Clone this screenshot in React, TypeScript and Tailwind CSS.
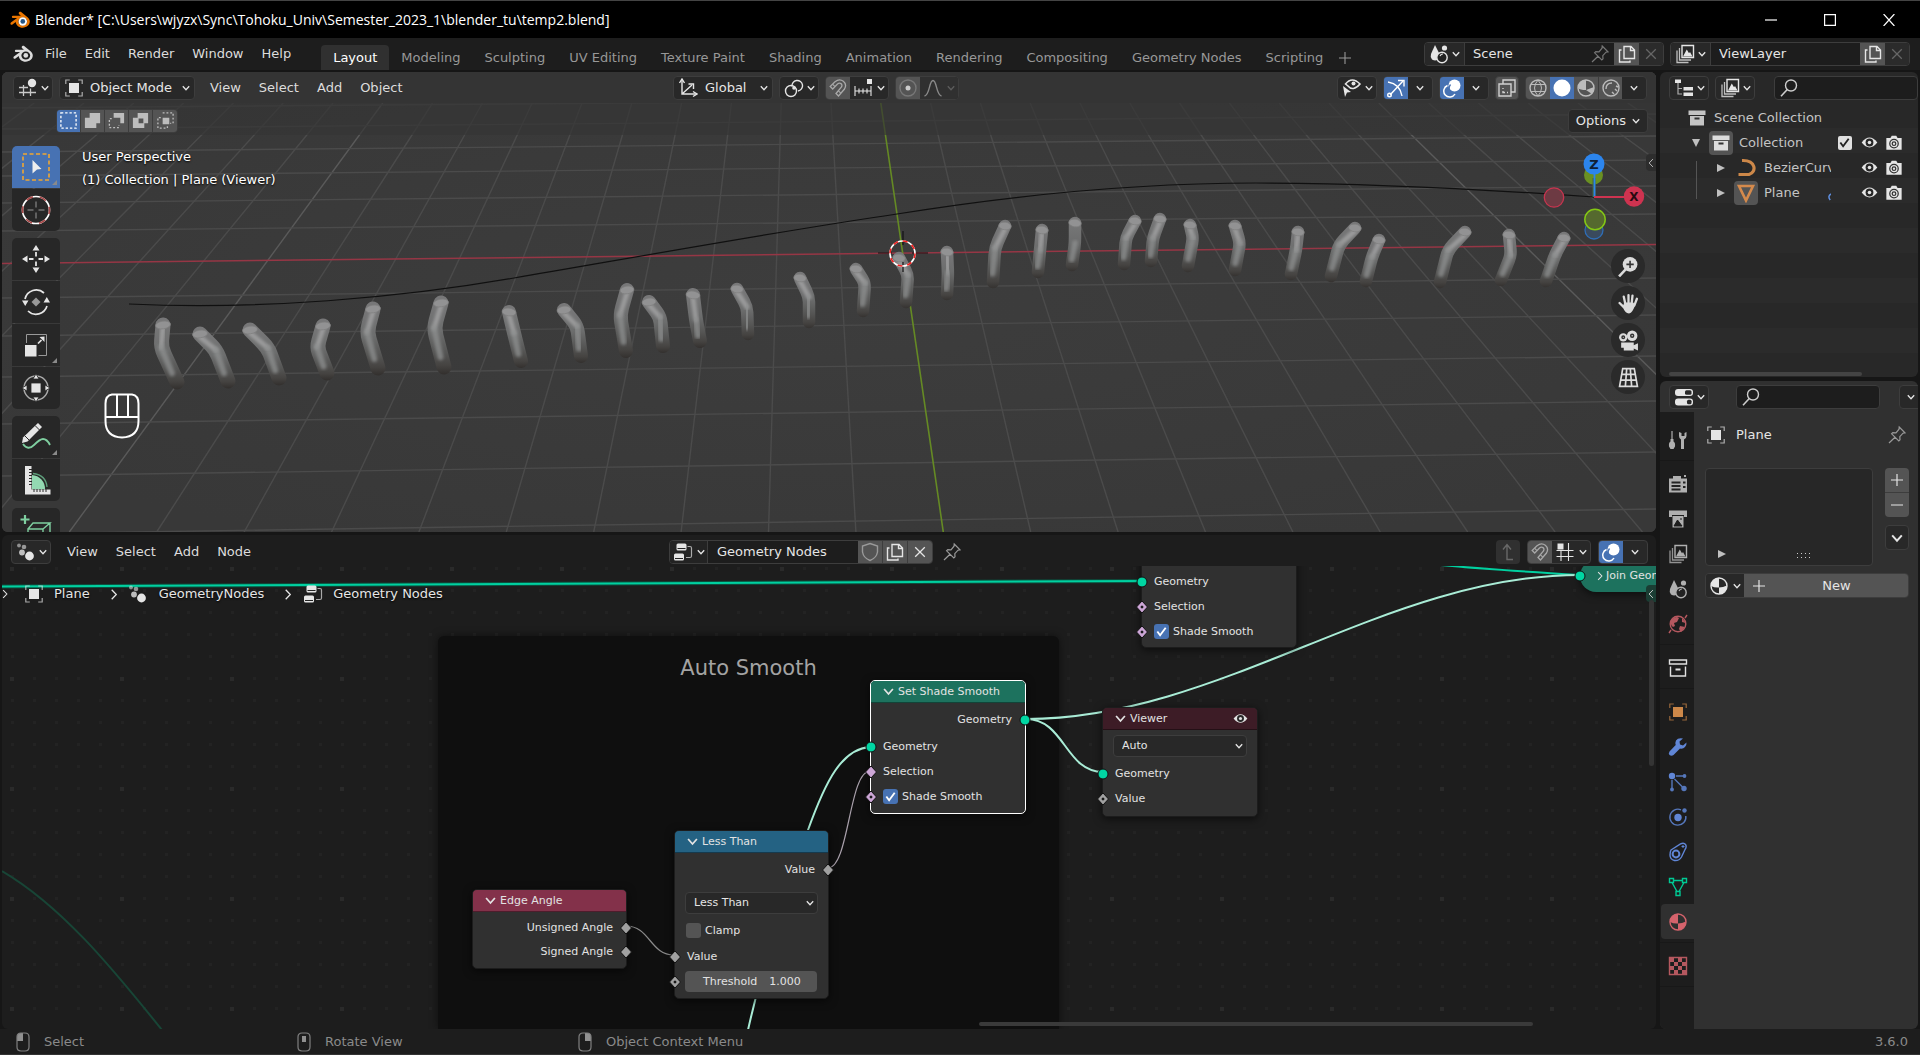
import { useState, type ReactNode } from "react";
import { clsx } from "clsx";

/* ---------- icons ---------- */

function Icon({ children, className = "size-5" }: { children: ReactNode; className?: string }) {
  return (
    <svg viewBox="0 0 20 20" className={clsx("shrink-0", className)} fill="none" stroke="currentColor" strokeWidth="1.4" aria-hidden="true">
      {children}
    </svg>
  );
}

const Chevron = ({ className = "w-2 h-3" }: { className?: string }) => (
  <svg viewBox="0 0 8 8" className={clsx("shrink-0", className)} fill="none" stroke="currentColor" strokeWidth="1.3" aria-hidden="true">
    <path d="M.8 2.2 4 5.8 7.2 2.2" />
  </svg>
);
const ChevronRight = ({ className = "w-2 h-3" }: { className?: string }) => (
  <svg viewBox="0 0 8 12" className={clsx("shrink-0", className)} fill="none" stroke="currentColor" strokeWidth="1.4" aria-hidden="true">
    <path d="M1.5 .8 6.5 6 1.5 11.2" />
  </svg>
);
const ChevronLeft = ({ className = "w-2 h-3" }: { className?: string }) => (
  <svg viewBox="0 0 8 12" className={clsx("shrink-0", className)} fill="none" stroke="currentColor" strokeWidth="1.3" aria-hidden="true">
    <path d="M6.5 .8 1.5 6 6.5 11.2" />
  </svg>
);
const BlenderLogo = ({ color = false }: { color?: boolean }) => (
  <svg viewBox="0 0 24 22" className="h-[18px] w-5 shrink-0" aria-hidden="true">
    <path
      fill={color ? "#ea7600" : "#dcdcdc"}
      fillRule="evenodd"
      d="M11.2 1.2c.7-.5 1.600-.5 2.200 0l8.200 6.600c3.200 2.800 3 7.400.2 10-3.400 3.200-9.200 3.400-12.600.4-1.500-1.300-2.300-3-2.400-4.800l-4 3c-.8.6-1.900.4-2.300-.3-.4-.7-.2-1.400.4-1.900l7.500-5.700H3.800c-1 0-1.700-.6-1.700-1.300 0-.8.700-1.300 1.600-1.300h9.400L11 4c-.9-.9-.7-2.200.2-2.800ZM15.400 7.800c-3 0-5.400 2.200-5.400 5s2.400 5 5.400 5 5.400-2.200 5.400-5-2.400-5-5.400-5Z"
    />
    {color && <circle cx="15.400" cy="12.800" r="5.200" fill="#fff" />}
    <circle cx="15.400" cy="12.800" r="2.900" fill={color ? "#265787" : "#dcdcdc"} />
  </svg>
);
const Pin = ({ className }: { className?: string }) => (
  <Icon className={className}>
    <path d="m12.200 2 5.800 5.800-2 .4-3.200 3.400.2 3.200-1.200 1.200L4.600 8.800 5.800 7.600l3.200.2 3-3.600ZM8 12.200 2 18" strokeWidth="1.2" />
  </Icon>
);
const Copy = () => (
  <Icon>
    <path d="M7 2.500h7l3.500 3.500v8.500H7ZM13.500 2.500V6.500h4M4.500 6H2.500v12H13v-1.500" />
  </Icon>
);
const Cross = () => (
  <Icon className="size-4">
    <path d="m4 4 12 12M16 4 4 16" strokeWidth="1.600" />
  </Icon>
);
const Search = () => (
  <Icon>
    <circle cx="12" cy="7.500" r="5.500" />
    <path d="m8.500 11.300-6.500 7" strokeWidth="1.600" />
  </Icon>
);
const ObjectSquare = ({ className }: { className?: string }) => (
  <Icon className={className}>
    <rect x="5" y="5" width="10" height="10" fill="currentColor" stroke="none" />
    <path d="M1.800 6V2h4M14.200 2h4v4M18.200 14v4h-4M5.800 18h-4v-4" strokeWidth="1.200" opacity=".7" />
  </Icon>
);
const CollectionIcon = () => (
  <Icon>
    <path d="M1.500 2.500h17V7h-17ZM3 8h14v9.500H3Z" fill="currentColor" stroke="none" />
    <path d="M7.500 10.500h5" stroke="#333" strokeWidth="2" />
  </Icon>
);
const EditorGrid = () => (
  <Icon>
    <circle cx="14" cy="5" r="4.200" fill="currentColor" stroke="none" />
    <path d="M1 9.500h9M1 14.500h17M5.500 7v11M12.500 10.500V18" strokeWidth="1.300" opacity=".85" />
  </Icon>
);
const NodeEditorIcon = () => (
  <Icon>
    <g fill="currentColor" stroke="none">
      <circle cx="3" cy="3.500" r="1.900" opacity=".55" />
      <circle cx="8" cy="5" r="2.300" opacity=".6" />
      <circle cx="6" cy="10.500" r="2.900" opacity=".8" />
      <circle cx="13.500" cy="14" r="4.400" />
    </g>
  </Icon>
);
const NodeTreeIcon = () => (
  <Icon>
    <rect x="3.500" y="1.500" width="10" height="7" rx="1.500" fill="currentColor" stroke="none" />
    <rect x="1" y="11.500" width="10" height="7" rx="1.500" fill="currentColor" stroke="none" />
    <path d="M4.500 6.500h8M2 16.500h8" stroke="#222" strokeWidth="1" />
    <path d="M14.500 4.500h2.500q1.500 0 1.500 1.500v8q0 1.500-1.500 1.500h-4" strokeWidth="1.200" opacity=".7" />
  </Icon>
);
const ImageStack = () => (
  <Icon>
    <path d="M7 1.500h11.500v12H7Z" />
    <path d="m8 12.500 3.800-7 2.200 3.800 1-1.300 2.500 4.500Z" fill="currentColor" stroke="none" />
    <path d="M4.500 4v12H16M2 6.500v12h11.500" strokeWidth="1.300" opacity=".8" />
  </Icon>
);
const SceneIcon = () => (
  <Icon>
    <path d="M6 1 11 11q0 3-3 5-2 1-5-.500Q1 13 2 10Z" fill="currentColor" stroke="none" />
    <circle cx="15.500" cy="4" r="2.600" fill="currentColor" stroke="none" />
    <circle cx="13" cy="13.500" r="5.200" fill="#222" />
    <path d="M11 12q1-2.200 3-2" strokeWidth="1.100" />
  </Icon>
);
const Magnet = () => (
  <Icon>
    <path d="M2.200 8.500 7 3.800C13 -1 20 5 16.500 11L10.500 18 8 15.500l5.500-6.500c1.500-3-1.500-5-4-3L4.700 11Z" strokeWidth="1.300" />
    <path d="m4.500 6.200 2.500 2.500M10.200 12.700l2.600 2.500" strokeWidth="1.100" />
  </Icon>
);
const Overlays = () => (
  <Icon>
    <circle cx="12.500" cy="7.500" r="6" fill="currentColor" stroke="none" />
    <path d="M5.500 7.500a6 6 0 1 0 7.500 8.500" strokeWidth="1.500" />
    <path d="M8.500 6.500q-3 4 .500 7" stroke="#4772b3" strokeWidth="1.300" />
  </Icon>
);
const MaterialBall = () => (
  <Icon>
    <circle cx="10" cy="10" r="8" />
    <path d="M10 2a8 8 0 0 0-8 8q4 2 8 1.500ZM10 11.500q4 0 8-2a8 8 0 0 1-8 8.500Z" fill="currentColor" stroke="none" />
  </Icon>
);
const Eye = ({ className = "size-[17px]" }: { className?: string }) => (
  <Icon className={className}>
    <path d="M.8 10Q10-1.500 19.200 10 10 21.500 .8 10Z" fill="currentColor" stroke="none" />
    <circle cx="10" cy="10" r="4.600" fill="#262626" stroke="none" />
    <circle cx="10" cy="10" r="2.100" fill="currentColor" stroke="none" />
  </Icon>
);
const Camera = () => (
  <Icon className="size-[18px]">
    <path d="M1.500 4.500H6L7.500 2h5L14 4.500h4.500v13h-17Z" fill="currentColor" stroke="none" />
    <circle cx="10" cy="10.700" r="4.700" stroke="#333" />
    <circle cx="10" cy="10.700" r="2" stroke="#333" />
  </Icon>
);

/* ---------- shared widgets ---------- */

const box = "flex h-6 shrink-0 items-center rounded border border-[#3d3d3d] bg-[#282828] text-[#e5e5e5]";

function IconDrop({ label, children }: { label: string; children: ReactNode }) {
  return (
    <button aria-label={label} className={clsx(box, "w-10 justify-center gap-[3px]")}>
      {children}
      <Chevron />
    </button>
  );
}

function Menus({ items, className }: { items: string[]; className?: string }) {
  return (
    <nav className={clsx("flex items-center text-[#dcdcdc]", className)}>
      {items.map((m) => (
        <button key={m} className="px-[9px]">{m}</button>
      ))}
    </nav>
  );
}

function Drop({ label, options, icon, className }: { label: string; options: string[]; icon?: ReactNode; className?: string }) {
  return (
    <label className={clsx("flex items-center rounded border border-[#3d3d3d] bg-[#282828] text-[#e5e5e5]", className)}>
      {icon}
      <select aria-label={label} className="min-w-0 flex-1 appearance-none bg-transparent outline-none">
        {options.map((o) => (
          <option key={o}>{o}</option>
        ))}
      </select>
      <Chevron />
    </label>
  );
}

function Check({ label, initial = false, light = false, hideLabel = false }: { label: string; initial?: boolean; light?: boolean; hideLabel?: boolean }) {
  const [on, setOn] = useState(initial);
  return (
    <label className="flex items-center gap-1">
      <span className="grid size-[15px] shrink-0 place-items-center">
        <input
          type="checkbox"
          aria-label={label}
          checked={on}
          onChange={() => setOn(!on)}
          className={clsx("col-start-1 row-start-1 appearance-none", light ? "size-[14px] rounded-[2px] bg-[#e0e0e0]" : "size-[15px] rounded-[3px]", !light && (on ? "bg-[#4772b3]" : "bg-[#545454]"))}
        />
        {on && (
          <svg viewBox="0 0 14 14" className="pointer-events-none col-start-1 row-start-1 size-[13px]" fill="none" stroke={light ? "#222" : "#fff"} strokeWidth="2">
            <path d="m2.500 7 3 4L11.500 3" />
          </svg>
        )}
      </span>
      {!hideLabel && label}
    </label>
  );
}

/* ---------- top bars ---------- */

function TitleBar() {
  return (
    <header className="flex h-[38px] shrink-0 items-center border-t border-[#444] bg-black px-[10px] text-white">
      <BlenderLogo color />
      <h1 className="ml-[5px] font-['Open_Sans',sans-serif] text-[14px]">
        Blender* [C:\Users\wjyzx\Sync\Tohoku_Univ\Semester_2023_1\blender_tu\temp2.blend]
      </h1>
      <div className="ml-auto flex">
        <button aria-label="Minimize" className="flex w-[59px] justify-center">
          <Icon className="size-3"><path d="M0 10h20" strokeWidth="2" /></Icon>
        </button>
        <button aria-label="Maximize" className="flex w-[59px] justify-center">
          <Icon className="size-3"><path d="M1 1h18v18H1Z" strokeWidth="2" /></Icon>
        </button>
        <button aria-label="Close" className="-mr-[8px] flex w-[59px] justify-center">
          <Icon className="size-3"><path d="m1 0 18 20M19 0 1 20" strokeWidth="2" /></Icon>
        </button>
      </div>
    </header>
  );
}

const workspaces = ["Layout", "Modeling", "Sculpting", "UV Editing", "Texture Paint", "Shading", "Animation", "Rendering", "Compositing", "Geometry Nodes", "Scripting"];

function IdField({ label, value, icon, pin, className }: { label: string; value: string; icon: ReactNode; pin?: boolean; className?: string }) {
  return (
    <div className={clsx("flex h-6 shrink-0 items-stretch overflow-hidden rounded border border-[#3d3d3d] bg-[#1d1d1d] text-[#e5e5e5]", className)}>
      <button aria-label={`Browse ${label}`} className="flex w-10 items-center justify-center gap-[3px] border-r border-[#3d3d3d] bg-[#282828]">
        {icon}
        <Chevron />
      </button>
      <input aria-label={label} defaultValue={value} className="w-0 min-w-0 flex-1 bg-transparent pl-2 outline-none" />
      {pin && <span className="flex items-center pr-1 text-[#777]"><Pin /></span>}
      <button aria-label={`New ${label}`} className="flex w-[25px] items-center justify-center bg-[#545454]"><Copy /></button>
      <button aria-label={`Remove ${label}`} className="flex w-6 items-center justify-center bg-[#2b2b2b] text-[#666]"><Cross /></button>
    </div>
  );
}

function TopBar() {
  return (
    <div className="flex h-8 shrink-0 items-start bg-[#1d1d1d] pl-[13px] pr-[10px]">
      <div className="flex h-8 items-center">
        <BlenderLogo />
        <Menus items={["File", "Edit", "Render", "Window", "Help"]} className="ml-[3px]" />
      </div>
      <div role="tablist" className="ml-[21px] flex h-8 items-end">
        {workspaces.map((w, i) => (
          <button key={w} role="tab" aria-selected={i === 0} className={clsx("h-[25px] rounded-t px-3", i === 0 ? "bg-[#303030] text-white" : "text-[#989898]")}>
            {w}
          </button>
        ))}
        <button aria-label="Add workspace" className="ml-1 h-[25px] text-[#989898]">
          <Icon className="size-3"><path d="M0 10h20M10 0v20" strokeWidth="1.800" /></Icon>
        </button>
      </div>
      <div className="ml-auto mt-1 flex gap-[6px]">
        <IdField label="Scene" value="Scene" icon={<SceneIcon />} pin className="w-[240px]" />
        <IdField label="View layer" value="ViewLayer" icon={<ImageStack />} className="w-[240px]" />
      </div>
    </div>
  );
}

/* ---------- 3D viewport scene ---------- */

type Pt = [number, number];
const tubes: [Pt, Pt, Pt][] = [
  [[163, 325], [161, 347], [177, 382]],
  [[200, 334], [216, 350], [228, 381]],
  [[250, 330], [268, 348], [279, 378]],
  [[323, 326], [317, 347], [327, 373]],
  [[373, 309], [367, 332], [378, 368]],
  [[441, 303], [434, 328], [444, 367]],
  [[509, 312], [514, 333], [521, 361]],
  [[564, 310], [577, 326], [581, 356]],
  [[627, 290], [620, 315], [626, 351]],
  [[649, 302], [660, 317], [663, 346]],
  [[693, 295], [696, 320], [700, 341]],
  [[737, 289], [747, 307], [748, 334]],
  [[800, 278], [809, 297], [809, 322]],
  [[856, 269], [865, 283], [863, 311]],
  [[899, 258], [908, 275], [906, 302]],
  [[947, 252], [948, 273], [947, 294]],
  [[1005, 226], [995, 248], [993, 282]],
  [[1042, 230], [1040, 250], [1038, 272]],
  [[1075, 223], [1075, 243], [1072, 265]],
  [[1135, 221], [1126, 238], [1124, 264]],
  [[1160, 219], [1153, 238], [1151, 261]],
  [[1190, 225], [1193, 238], [1188, 266]],
  [[1235, 226], [1240, 243], [1235, 270]],
  [[1298, 232], [1296, 250], [1291, 274]],
  [[1355, 228], [1339, 245], [1331, 276]],
  [[1379, 240], [1372, 257], [1366, 281]],
  [[1465, 232], [1448, 250], [1440, 282]],
  [[1509, 235], [1511, 255], [1501, 280]],
  [[1564, 238], [1555, 255], [1546, 281]],
];

const rows: [number, number][] = [
  [87, 76], [108, 95], [129, 114], [152, 136], [176, 160], [203, 186], [231, 214],
  [298, 278], [336, 315], [377, 356], [424, 401], [476, 452], [534, 509],
];
const columns = Array.from({ length: 49 }, (_, i) => i - 24).filter((k) => k !== 0);

function tubePath([a, b, c]: [Pt, Pt, Pt]) {
  const mix = (p: Pt, q: Pt, t: number) => `${p[0] + (q[0] - p[0]) * t} ${p[1] + (q[1] - p[1]) * t}`;
  return `M${a[0]} ${a[1]} L${mix(a, b, 0.7)} Q${b[0]} ${b[1]} ${mix(b, c, 0.2)} L${c[0]} ${c[1]}`;
}

function Scene() {
  return (
    <svg viewBox="2 72 1654 460" preserveAspectRatio="xMidYMid slice" className="absolute inset-0 size-full" aria-label="3D scene">
      <defs>
        <radialGradient id="bg" cx=".5" cy=".5" r=".6">
          <stop offset="0" stopColor="#3d3d3d" />
          <stop offset="1" stopColor="#383838" />
        </radialGradient>
        {tubes.map(([a, , c], i) => (
          <linearGradient key={i} id={`t${i}`} gradientUnits="userSpaceOnUse" x1="0" x2="0" y1={a[1]} y2={c[1] + 7}>
            <stop offset="0" stopColor="#777778" />
            <stop offset=".4" stopColor="#6c6d6d" />
            <stop offset=".7" stopColor="#555554" />
            <stop offset=".88" stopColor="#454341" />
            <stop offset="1" stopColor="#33302e" />
          </linearGradient>
        ))}
        <filter id="soft" x="-100%" y="-20%" width="300%" height="140%"><feGaussianBlur stdDeviation="1.6" /></filter>
      </defs>
      <rect x="2" y="72" width="1654" height="460" fill="url(#bg)" />
      <g strokeWidth="1.400" stroke="#4b4b4b">
        {columns.map((k) => (
          <line key={k} x1={880.8 + 49.8 * k} y1="103" x2={943.3 + 87.4 * k} y2="532" stroke={Math.abs(k) === 10 ? "#5a5a5a" : undefined} />
        ))}
        {rows.map(([l, r]) => (
          <line key={l} x1="2" y1={l} x2="1656" y2={r} />
        ))}
      </g>
      <line x1="2" y1="263.500" x2="1656" y2="244.500" stroke="#963645" strokeWidth="1.500" />
      <line x1="880.800" y1="103" x2="943.300" y2="532" stroke="#658a24" strokeWidth="1.600" />
      <path d="M129 304 C260 310 400 298 514 278 C620 260 780 231 897 214 C1040 191 1160 183 1256 183 C1360 183 1480 189 1594 197" fill="none" stroke="#101010" strokeWidth="1.200" />
      {tubes.map((t, i) => {
        const left = t[0][0] < 700;
        const w = t[0][0] < 480 ? 15 : left ? 14 : 12.5;
        const [a, b, c] = t;
        return (
          <g key={i} fill="none" strokeLinejoin="round">
            <path d={tubePath(t)} stroke={`url(#t${i})`} strokeWidth={w} strokeLinecap="round" />
            <path d={`M${a[0]} ${a[1] + 3} L${b[0]} ${b[1]}`} stroke="#b0b0b1" strokeWidth="5" opacity=".65" filter="url(#soft)" strokeLinecap="round" />
            <path d={`M${b[0]} ${b[1]} L${(b[0] + c[0] * 3) / 4 - 1} ${(b[1] + c[1] * 3) / 4}`} stroke="#8e9090" strokeWidth="6" opacity=".75" filter="url(#soft)" strokeLinecap="round" />
            <ellipse cx={a[0]} cy={a[1]} rx={w / 2} ry="3.800" fill="#929293" stroke="#7f7f80" strokeWidth=".7" transform={`rotate(${left && a[0] !== 509 && a[0] !== 693 ? -8 : 8} ${a[0]} ${a[1]})`} />
          </g>
        );
      })}
      <path d="M878 253h14M912 253h16M903 231v14M903 262v10" stroke="#111" strokeWidth="1.200" />
      <circle cx="902.500" cy="253.500" r="12.500" fill="none" stroke="#fff" strokeWidth="1.600" />
      <circle cx="902.500" cy="253.500" r="12.500" fill="none" stroke="#f02020" strokeWidth="1.600" strokeDasharray="4.900 4.900" />
    </svg>
  );
}

function AxisGizmo() {
  return (
    <svg viewBox="0 0 104 90" className="absolute right-[10px] top-[80px] h-[90px] w-[104px]" aria-label="View orientation">
      <g transform="translate(-1542 -152)">
        <circle cx="1593.500" cy="175" r="9.500" fill="#6a9022" />
        <circle cx="1594" cy="230" r="9" fill="#3a4a5e" stroke="#2f6db5" strokeWidth="1.300" />
        <circle cx="1554" cy="197.500" r="9.700" fill="#6d3a43" stroke="#c7354f" strokeWidth="1.300" />
        <path d="M1594 178v19" stroke="#47683e" strokeWidth="3" />
        <path d="M1594.500 164v33" stroke="#2c85ed" strokeWidth="1.800" />
        <path d="M1594 197h32" stroke="#ce3350" strokeWidth="2" />
        <circle cx="1594" cy="164" r="10.500" fill="#2c85ed" />
        <circle cx="1634" cy="196.500" r="10.200" fill="#ce3350" />
        <circle cx="1595" cy="219.500" r="10.200" fill="#55692e" stroke="#84c715" strokeWidth="1.500" />
        <text x="1594" y="168.500" textAnchor="middle" fontSize="13" fontWeight="700" fill="#102036">Z</text>
        <text x="1634" y="201" textAnchor="middle" fontSize="12" fontWeight="700" fill="#2a0a10">X</text>
      </g>
    </svg>
  );
}

const navIcons: [string, ReactNode][] = [
  ["Zoom", <Icon key="z" className="size-[21px]"><circle cx="11.500" cy="8" r="7" fill="#dcdcdc" stroke="none" /><path d="m7.500 12.500-6.500 7" stroke="#dcdcdc" strokeWidth="2.400" /><path d="M11.500 4.500v7M8 8h7" stroke="#333" strokeWidth="1.500" /></Icon>],
  ["Pan", <Icon key="p" className="size-[21px]"><path d="M7 10.500 5.500 3.500M10 10V2M13 10l.8-7.500M15.500 12 18 5.500M5.500 13.500 1.500 9.500" stroke="#dcdcdc" strokeWidth="2.200" strokeLinecap="round" /><path d="M6 9h8.500l1.800 2.500Q14 19 10.500 19.500 6.500 19 4.500 13Z" fill="#dcdcdc" stroke="none" /></Icon>],
  ["Camera view", <Icon key="c" className="size-[21px]"><g fill="#dcdcdc" stroke="none"><circle cx="5" cy="7" r="4" /><circle cx="13.500" cy="5.500" r="5" /><path d="M3 12h12v2.500l4-2v7l-4-2V19.500H5.500V17H3Z" /></g><circle cx="5" cy="7" r="1.200" stroke="#333" /><circle cx="13.500" cy="5.500" r="1.400" stroke="#333" /></Icon>],
  ["Perspective", <Icon key="g" className="size-[21px]"><path d="M4.500 1.500h11L18.500 18.500h-17ZM3.500 7h13M2.500 12.500h15M8.300 1.500 7 18.500M11.700 1.500 13 18.500" stroke="#dcdcdc" strokeWidth="1.600" /></Icon>],
];

const Corner = () => (
  <svg viewBox="0 0 5 5" className="absolute bottom-[3px] right-[3px] size-[5px]" fill="#8a8a8a"><path d="M5 0v5H0Z" /></svg>
);

const toolGroups: { name: string; corner?: boolean; icon: ReactNode }[][] = [
  [
    { name: "Select Box", corner: true, icon: <><path d="M2 2h26v26H2Z" stroke="#f0a732" strokeWidth="1.600" strokeDasharray="4 2.500" /><path d="m11.500 8 9 9-4.500.500-4.500 4Z" fill="#eee" stroke="none" /></> },
    { name: "Cursor", icon: <><circle cx="15" cy="15" r="13.500" stroke="#fff" strokeWidth="1.700" /><circle cx="15" cy="15" r="13.500" stroke="#a94a4a" strokeWidth="1.700" strokeDasharray="7 7" strokeDashoffset="3" /><path d="M15 6.500v6M15 17.500v6M6.500 15h6M17.500 15h6" stroke="#9a9a9a" /></> },
  ],
  [
    { name: "Move", icon: <><path d="M15 1l3.500 5.500h-7ZM15 29l3.500-5.500h-7ZM1 15l5.500-3.500v7ZM29 15l-5.500-3.500v7Z" fill="currentColor" stroke="none" /><path d="M15 8v4.500M15 17.500V22M8 15h4.500M17.500 15H22" strokeWidth="1.800" /></> },
    { name: "Rotate", icon: <><path d="M4 12A11.500 11.500 0 0 1 23 6M26 19A11.500 11.500 0 0 1 7 24" strokeWidth="1.700" /><path d="M1 13.500h6.500L4.200 19ZM22.500 15.500H29L25.800 10Z" fill="currentColor" stroke="none" /><path d="m15 10.500 4.500 4.500-4.500 4.500-4.500-4.500Z" fill="#999" stroke="none" /></> },
    { name: "Scale", corner: true, icon: <><path d="M5.500 13V4.500h20v21h-8" stroke="#999" /><path d="M4 15h11.500v11.500H4Z" fill="currentColor" stroke="none" /><path d="m17 13.500 3.500-3.500" strokeWidth="1.700" /><path d="M23.500 6.500v5.500l-5-5Z" fill="currentColor" stroke="none" /></> },
    { name: "Transform", icon: <><circle cx="15" cy="15" r="12" stroke="#aaa" strokeWidth="1.400" /><path d="M10 10h10v10H10ZM15 1l3 5h-6ZM15 29l3-5h-6ZM1 15l5-3v6ZM29 15l-5-3v6Z" fill="currentColor" stroke="#282828" strokeWidth=".8" /></> },
  ],
  [
    { name: "Annotate", corner: true, icon: <><path d="m1 21 1-5.500L17 1l4 4L6.500 19.500Z" fill="currentColor" stroke="none" /><path d="m14 3.500 4.500 4.500M4 14l4 4" stroke="#282828" /><path d="M2 22q5 7 11 1t9-6q4 0 7 6" stroke="#7fcfa0" strokeWidth="1.800" /></> },
    { name: "Measure", icon: <><path d="M11 24.500V10a14 14 0 0 1 13 14.500Z" fill="#93d9b2" stroke="none" /><path d="M12 8.500Q25 10 26 22" stroke="#5d9d7a" strokeWidth="1.300" /><path d="M4 1h6.500v23.500h19V29.500H4Z" fill="#e5e5e5" stroke="none" /><path d="M8 4.500h3M8 7.500h3M8 10.500h3M8 13.500h3M8 16.500h3M8 19.500h3M13 24v3M16 24v3M19 24v3M22 24v3M25 24v3" stroke="#282828" strokeWidth="1" /></> },
  ],
  [
    { name: "Add Cube", icon: <><path d="M4 1v9M-.5 5.500h9" stroke="#7fcfa0" strokeWidth="2.200" /><path d="M7 30V15h15v15M7 15l5-6h17l-7 6M29 9v21" stroke="#7fcfa0" strokeWidth="1.400" /></> },
  ],
];

const seg = "flex h-full w-6 items-center justify-center";

const selectModes: ReactNode[] = [
  <path key="0" d="M2 2h16v16H2Z" strokeDasharray="2.500 2" />,
  <path key="1" d="M7 2h11v11h-4v5H2V7h5Z" fill="#bdbdbd" stroke="none" />,
  <g key="2"><path d="M7 2h11v11h-4V7H7Z" fill="#bdbdbd" stroke="none" /><path d="M5 8H2.500v9.500h10V15" strokeDasharray="2 2" stroke="#bdbdbd" /></g>,
  <path key="3" d="M7 2h11v11h-4v5H2V7h5ZM8 8v5h5V8Z" fill="#bdbdbd" stroke="none" fillRule="evenodd" />,
  <g key="4" stroke="#bdbdbd"><path d="M7 2h11v11h-3M5 7H2v11h10v-3" strokeDasharray="2 2" /><path d="M7 7h7v7H7Z" fill="#bdbdbd" stroke="none" /></g>,
];

function Viewport() {
  return (
    <section className="relative min-h-0 flex-[460] overflow-hidden rounded-md bg-[#3b3b3b]">
      <Scene />
      <div className="relative flex h-[31px] items-center bg-[#343434] pl-[11px] pr-[9px]">
        <div className="flex flex-1 items-center">
          <IconDrop label="Editor type"><EditorGrid /></IconDrop>
          <Drop label="Mode" options={["Object Mode", "Edit Mode"]} icon={<span className="mr-[6px]"><ObjectSquare /></span>} className="ml-[6px] h-6 w-[136px] px-1" />
          <Menus items={["View", "Select", "Add", "Object"]} className="ml-[6px]" />
        </div>
        <div className="mr-7 flex gap-[6px]">
          <Drop label="Orientation" options={["Global", "Local"]} icon={<Icon className="mr-[7px] size-5"><path d="M4 2v14h14M4 16 14 7" /><path d="M1.500 5 4 1l2.500 4M15 13.500l4 2.500-4 2.500M10.500 6h5v5" /></Icon>} className="h-6 w-[100px] px-1" />
          <IconDrop label="Pivot point"><Icon><circle cx="7" cy="13" r="5.500" /><path d="M8 8.500a5.300 5.300 0 1 1 6 4.500" /><circle cx="10" cy="10" r="1.800" fill="currentColor" stroke="none" /></Icon></IconDrop>
          <div className={clsx(box, "overflow-hidden")}>
            <button aria-label="Snap" className={clsx(seg, "bg-[#545454] text-[#a8a8a8]")}><Magnet /></button>
            <button aria-label="Snap options" className="flex w-[38px] items-center justify-center gap-1"><Icon><path d="M2 8v10M18 8v10M2 13h16M6 10.500v5M10 10.500v5M14 10.500v5" strokeWidth="1.100" /><path d="M14 1h5v5h-5Z" fill="currentColor" stroke="none" /></Icon><Chevron /></button>
          </div>
          <div className={clsx(box, "overflow-hidden")}>
            <button aria-label="Proportional editing" className={clsx(seg, "bg-[#545454] text-[#777]")}><Icon><circle cx="10" cy="10" r="8" /><circle cx="10" cy="10" r="2.500" fill="#ccc" stroke="none" /></Icon></button>
            <button aria-label="Falloff" className="flex h-full w-[38px] items-center justify-center gap-1 bg-[#303030] text-[#888]"><Icon><path d="M1.500 18C7 17 6 2.500 10 2.500S13 17 18.500 18" /></Icon><Chevron className="h-3 w-2 opacity-50" /></button>
          </div>
        </div>
        <div className="flex flex-1 items-center justify-end gap-[6px]">
          <IconDrop label="Visibility"><Icon><path d="M3.500 6Q10-2 18 6q-7 8-12 2Z" strokeWidth="1.600" /><circle cx="11.500" cy="5.500" r="2" fill="currentColor" stroke="none" /><path d="m1 8 8 6-4 .500-2 4.500Z" fill="currentColor" stroke="none" /></Icon></IconDrop>
          <div className={clsx(box, "overflow-hidden")}>
            <button aria-label="Gizmos" className={clsx(seg, "bg-[#4772b3] text-white")}><Icon><path d="M2 4q12 2 14 14M4 17 17 3" /><path d="M12 2.500h6v6" /><circle cx="3.500" cy="17" r="1.800" /></Icon></button>
            <button aria-label="Gizmo options" className={seg}><Chevron /></button>
          </div>
          <div className={clsx(box, "overflow-hidden")}>
            <button aria-label="Overlays" className={clsx(seg, "bg-[#4772b3] text-white")}><Overlays /></button>
            <button aria-label="Overlay options" className={seg}><Chevron /></button>
          </div>
          <button aria-label="X-ray" className="flex size-6 items-center justify-center rounded border border-[#3d3d3d] bg-[#545454] text-[#d0d0d0]"><Icon><path d="M2 6h12v12H2ZM6 6V2h12v12h-4M6 10v1M6 13v1.500h2M10 14.500h1" /></Icon></button>
          <div className={clsx(box, "overflow-hidden")}>
            <button aria-label="Wireframe" className={clsx(seg, "bg-[#545454] text-[#bbb]")}><Icon><circle cx="10" cy="10" r="8" /><path d="M3 6.500h14M3 13.500h14M10 2Q3 10 10 18M10 2q7 8 0 16" strokeWidth="1" /></Icon></button>
            <button aria-label="Solid" className={clsx(seg, "bg-[#4772b3] text-white")}><Icon><circle cx="10" cy="10" r="8.500" fill="currentColor" stroke="none" /></Icon></button>
            <button aria-label="Material preview" className={clsx(seg, "bg-[#545454] text-[#bbb]")}><Icon><circle cx="10" cy="10" r="8" /><path d="M10 2a8 8 0 0 0-8 8q2 2 8 2ZM10 12l6 4a8 8 0 0 0 2-7Z" fill="currentColor" stroke="none" /></Icon></button>
            <button aria-label="Rendered" className={clsx(seg, "border-l border-[#3d3d3d] bg-[#545454] text-[#bbb]")}><Icon><circle cx="10" cy="10" r="8" /><path d="M5 11Q5 5 11 5M15 8l2 1M14 11l2 2M11 14l2 2" /></Icon></button>
            <button aria-label="Shading options" className={seg}><Chevron /></button>
          </div>
        </div>
      </div>
      <div className="relative flex h-8 items-center bg-[#343434]/70 pl-[54px] pr-[9px] pt-[3px]">
        <div className="flex h-6 overflow-hidden rounded border border-[#3d3d3d]">
          {selectModes.map((icon, i) => (
            <button key={i} aria-label={`Select mode ${i + 1}`} className={clsx("flex w-6 items-center justify-center border-r border-[#3d3d3d] text-white last:border-0", i === 0 ? "bg-[#4772b3]" : "bg-[#545454]")}>
              <Icon className="size-[19px]">{icon}</Icon>
            </button>
          ))}
        </div>
        <button className={clsx(box, "-mr-px ml-auto gap-[6px] px-[7px]")}>Options<Chevron /></button>
      </div>
      <div className="absolute left-[10px] top-[74px] flex w-12 flex-col gap-[7px]">
        {toolGroups.map((g, gi) => (
          <div key={gi} className="flex flex-col gap-px overflow-hidden rounded-[5px]">
            {g.map((t) => (
              <button key={t.name} aria-label={t.name} className={clsx("relative flex h-[42px] items-center justify-center text-[#e5e5e5]", t.name === "Select Box" ? "bg-[#4772b3]" : "bg-[#272727]")}>
                <svg viewBox="0 0 30 30" className="size-[30px] overflow-visible" fill="none" stroke="currentColor" aria-hidden="true">{t.icon}</svg>
                {t.corner && <Corner />}
              </button>
            ))}
          </div>
        ))}
      </div>
      <div className="absolute left-20 top-[73px] leading-[23px] text-white [text-shadow:0_1px_2px_#000]">
        <p>User Perspective</p>
        <p>(1) Collection | Plane (Viewer)</p>
      </div>
      <svg viewBox="0 0 36 46" className="absolute left-[102px] top-[321px] h-[46px] w-9" fill="none" stroke="#fff" strokeWidth="2" aria-hidden="true">
        <path d="M8 1.500h20q6.500 1 6.500 9V28q0 16-16.500 16.500Q1.500 44 1.500 28V10.500q0-8 6.500-9ZM1.500 24h33M13 1.500V24M24 1.500V24" />
      </svg>
      <AxisGizmo />
      <div className="absolute right-[11px] top-[177px] flex flex-col gap-[3px]">
        {navIcons.map(([name, icon]) => (
          <button key={name} aria-label={name} className="flex size-[34px] items-center justify-center rounded-full bg-[#2a2a2a]">{icon}</button>
        ))}
      </div>
      <button aria-label="Toggle sidebar" className="absolute right-0 top-[82px] flex h-[17px] w-[10px] items-center justify-center rounded-l bg-[#2d2d2d] text-[#bbb]"><ChevronLeft className="h-[10px] w-[6px]" /></button>
    </section>
  );
}

/* ---------- node editor ---------- */

type Kind = "geo" | "bool" | "boolOpen" | "val" | "valOpen";

function Socket({ kind, side }: { kind: Kind; side: "in" | "out" }) {
  const fill = kind === "geo" ? "#00d6a3" : kind.startsWith("bool") ? "#cca6d6" : "#a1a1a1";
  return (
    <svg viewBox="0 0 14 14" className={clsx("absolute top-1/2 size-[14px] -translate-y-1/2", side === "in" ? "-left-[7px]" : "-right-[7px]")} stroke="#111" aria-hidden="true">
      {kind === "geo" ? <circle cx="7" cy="7" r="5" fill={fill} /> : <path d="M7 1 12.500 7 7 13 1.500 7Z" fill={fill} />}
      {kind.endsWith("Open") && <circle cx="7" cy="7" r="1" fill="#111" />}
    </svg>
  );
}

function Row({ kind, side = "in", children, className }: { kind?: Kind; side?: "in" | "out"; children: ReactNode; className?: string }) {
  return (
    <div className={clsx("relative flex h-[25px] items-center pl-3 pr-[13px]", side === "out" && "justify-end", className)}>
      {kind && <Socket kind={kind} side={side} />}
      {children}
    </div>
  );
}

function NodeCard({ title, head, className, extra, selected, children }: { title: string; head: string; className: string; extra?: ReactNode; selected?: boolean; children: ReactNode }) {
  return (
    <article className={clsx("absolute rounded-[5px] border bg-[#303030] pb-1 text-[11px] text-[#e2e2e2] shadow-[0_2px_8px_rgba(0,0,0,0.6)]", selected ? "border-white" : "border-[#1c1c1c]", className)}>
      <h3 className={clsx("flex h-[22px] items-center rounded-t-[4px] border-b border-black/40 pl-3 pr-[9px]", head)}>
        <Chevron className="mr-1 size-[11px]" />
        {title}
        {extra}
      </h3>
      {children}
    </article>
  );
}

const crumb = "flex items-center";

function NodeEditor() {
  return (
    <section className="flex min-h-0 flex-[494] flex-col overflow-hidden rounded-md bg-[#1d1d1d]">
      <div className="flex h-[31px] shrink-0 items-center pl-[9px] pr-2 pt-[2px]">
        <div className="flex flex-1 items-center">
          <IconDrop label="Editor type"><NodeEditorIcon /></IconDrop>
          <Menus items={["View", "Select", "Add", "Node"]} className="ml-[7px]" />
        </div>
        <div className="mr-7 flex h-6 items-stretch text-[#e5e5e5]">
          <div className="flex overflow-hidden rounded border border-[#3d3d3d]">
            <button aria-label="Browse node tree" className="flex w-[38px] items-center justify-center gap-1 border-r border-[#3d3d3d] bg-[#232323]"><NodeTreeIcon /><Chevron /></button>
            <input aria-label="Node tree" defaultValue="Geometry Nodes" className="w-[150px] bg-transparent pl-[9px] outline-none" />
            <button aria-label="Fake user" className="flex w-[25px] items-center justify-center border-r border-[#3d3d3d] bg-[#545454] text-[#999]"><Icon><path d="M10 1.500 17.500 4v6q-1 6-7.500 8.500Q3.500 16 2.500 10V4Z" /></Icon></button>
            <button aria-label="Duplicate tree" className="flex w-[25px] items-center justify-center border-r border-[#3d3d3d] bg-[#545454]"><Copy /></button>
            <button aria-label="Unlink tree" className="flex w-6 items-center justify-center bg-[#545454]"><Cross /></button>
          </div>
          <button aria-label="Pin" className="ml-[9px] flex items-center text-[#999]"><Pin /></button>
        </div>
        <div className="flex flex-1 items-center justify-end gap-[7px]">
          <button aria-label="Parent tree" className="flex size-6 items-center justify-center rounded bg-[#303030] text-[#686868]"><Icon><path d="M9 3v14.500h6M5 7.500 9 2.500l4 5" /></Icon></button>
          <div className={clsx(box, "overflow-hidden")}>
            <button aria-label="Snap" className={clsx(seg, "bg-[#545454] text-[#a8a8a8]")}><Magnet /></button>
            <button aria-label="Snap options" className="flex w-[38px] items-center justify-center gap-1"><Icon><path d="M1.500 8.500h17M1.500 14.500h17M6 8.500V19M13.500 1v18" strokeWidth="1.100" /><path d="M2.500 1.500h6v6h-6Z" fill="currentColor" stroke="none" /></Icon><Chevron /></button>
          </div>
          <div className={clsx(box, "overflow-hidden")}>
            <button aria-label="Overlays" className={clsx(seg, "bg-[#4772b3] text-white")}><Overlays /></button>
            <button aria-label="Overlay options" className={seg}><Chevron /></button>
          </div>
        </div>
      </div>

      <div className="relative min-h-0 flex-1 overflow-hidden">
        <svg className="absolute inset-0 size-full" fill="none" aria-hidden="true">
          <defs>
            <pattern id="dots" width="22" height="22" patternUnits="userSpaceOnUse" x="9" y="1"><path d="M0 0h3v3H0Z" fill="#232323" /></pattern>
            <pattern id="major" width="110" height="110" patternUnits="userSpaceOnUse" x="8" y="1"><path d="M0 0h4v4H0Z" fill="#2a2a2a" /></pattern>
          </defs>
          <rect width="100%" height="100%" fill="url(#dots)" />
          <rect width="100%" height="100%" fill="url(#major)" />
        </svg>

        <section className="absolute bottom-0 left-[436px] top-[70px] w-[621px] rounded-t-md bg-[#0f0f0f] pt-[18px] shadow-[0_0_8px_rgba(0,0,0,0.5)]">
          <h2 className="text-center text-[21px] leading-7 text-[#a3a3a3]">Auto Smooth</h2>
        </section>

        <svg className="absolute inset-0 size-full" fill="none" aria-hidden="true">
          <g transform="translate(-2 -566)">
            <path d="M2 871C60 905 110 965 162 1030" stroke="#184536" strokeWidth="2" />
            <path d="M2 586.500 1142 581" stroke="#0c4f3e" strokeWidth="4" />
            <path d="M2 586.500 1142 581" stroke="#00d0a0" strokeWidth="2" />
            <path d="M1430 564C1480 569 1530 572 1580 575" stroke="#00d0a0" strokeWidth="2" />
            <path d="M1026 719C1222 719 1384 575 1580 575" stroke="#a9ecd6" strokeWidth="2" />
            <path d="M1026 719C1065 719 1065 772 1103 772" stroke="#a9ecd6" strokeWidth="2" />
            <path d="M870 747C842 749 826 780 808 830C785 900 766 950 748 1030" stroke="#a9ecd6" strokeWidth="2" />
            <path d="M828 868C849 868 849 771 870 771" stroke="#a9a0ab" strokeWidth="1.200" />
            <path d="M626 926C650 926 650 955 674 955" stroke="#8a8a8a" strokeWidth="1.200" />
          </g>
        </svg>

        <article className="absolute left-[1139px] top-[-25px] w-[156px] rounded-[5px] border border-[#1c1c1c] bg-[#303030] pb-[3px] pt-[27px] text-[11px] text-[#e2e2e2] shadow-[0_2px_8px_rgba(0,0,0,0.6)]">
          <Row kind="geo">Geometry</Row>
          <Row kind="boolOpen">Selection</Row>
          <Row kind="boolOpen"><Check label="Shade Smooth" initial /></Row>
        </article>

        <NodeCard title="Set Shade Smooth" head="bg-[#1d725e]" className="left-[868px] top-[114px] w-[156px]" selected>
          <Row kind="geo" side="out" className="mt-1">Geometry</Row>
          <Row kind="geo" className="mt-[2px]">Geometry</Row>
          <Row kind="bool">Selection</Row>
          <Row kind="boolOpen"><Check label="Shade Smooth" initial /></Row>
        </NodeCard>

        <NodeCard title="Viewer" head="bg-[#3d1c26]" className="left-[1100px] top-[141px] w-[156px]" extra={<span className="ml-auto"><Eye className="size-[15px]" /></span>}>
          <div className="px-[10px] pt-[5px]"><Drop label="Viewer domain" options={["Auto", "Point"]} className="h-[22px] pl-2 pr-[3px]" /></div>
          <Row kind="geo" className="mt-1">Geometry</Row>
          <Row kind="valOpen" className="mb-px">Value</Row>
        </NodeCard>

        <NodeCard title="Less Than" head="bg-[#246283]" className="left-[672px] top-[264px] w-[155px]">
          <Row kind="val" side="out" className="mt-1">Value</Row>
          <div className="px-[10px] pt-[10px]"><Drop label="Operation" options={["Less Than", "Greater Than"]} className="h-[22px] pl-2 pr-[3px]" /></div>
          <Row className="mt-1 pl-[11px]"><Check label="Clamp" /></Row>
          <Row kind="val" className="mt-px">Value</Row>
          <Row kind="valOpen">
            <label className="-mx-[2px] flex h-[21px] flex-1 items-center rounded bg-[#545454] pl-[18px]">
              Threshold
              <input aria-label="Threshold" defaultValue="1.000" className="ml-3 w-10 bg-transparent outline-none" />
            </label>
          </Row>
        </NodeCard>

        <NodeCard title="Edge Angle" head="bg-[#83314a]" className="left-[470px] top-[323px] w-[155px]">
          <Row kind="val" side="out" className="mt-[3px]">Unsigned Angle</Row>
          <Row kind="val" side="out" className="-mt-px">Signed Angle</Row>
        </NodeCard>

        <article className="absolute left-[1578px] top-[-6px] flex h-8 w-[140px] items-center rounded-full bg-[#1d725e] pl-[17px] text-[11px] text-[#e2e2e2] shadow-[0_2px_8px_rgba(0,0,0,0.6)]">
          <Socket kind="geo" side="in" />
          <ChevronRight className="mr-[3px] h-[10px] w-[6px]" />
          <span className="whitespace-nowrap">Join Geometry</span>
        </article>

        <nav aria-label="Breadcrumb" className="absolute left-0 top-4 flex h-6 items-center text-[#e5e5e5] [text-shadow:0_1px_2px_#000]">
          <ChevronRight className="h-[10px] w-[6px]" />
          <a href="#plane" className={clsx(crumb, "ml-4 gap-[10px]")}><ObjectSquare />Plane</a>
          <ChevronRight className="ml-5 mr-[10px] h-[11px] w-[8px]" />
          <a href="#modifier" className={clsx(crumb, "gap-[11px]")}><NodeEditorIcon />GeometryNodes</a>
          <ChevronRight className="ml-5 mr-[11px] h-[11px] w-[8px]" />
          <a href="#tree" className={clsx(crumb, "gap-[10px]")}><NodeTreeIcon />Geometry Nodes</a>
        </nav>
        <button aria-label="Toggle sidebar" className="absolute right-0 top-[19px] flex h-[17px] w-[10px] items-center justify-center rounded-l bg-[#1a3d33] text-[#ccc]"><ChevronLeft className="h-[10px] w-[6px]" /></button>
        <div className="absolute right-[2px] top-[34px] h-[166px] w-[5px] rounded-full bg-[#343434]" />
        <div className="absolute bottom-[3px] right-[123px] h-1 w-[554px] rounded-full bg-[#3a3a3a]" />
      </div>
    </section>
  );
}

/* ---------- outliner ---------- */

const Tri = ({ open = false }: { open?: boolean }) => (
  <svg viewBox="0 0 8 8" className="size-2 shrink-0" fill="#c0c0c0" aria-hidden="true">
    <path d={open ? "M0 0h8L4 8Z" : "M0 0v8l8-4Z"} />
  </svg>
);

function Toggles() {
  return (
    <div className="ml-auto flex gap-[7px] text-[#e5e5e5]">
      <button aria-label="Hide in viewport"><Eye /></button>
      <button aria-label="Disable in renders"><Camera /></button>
    </div>
  );
}

function Outliner() {
  const row = "flex h-[25px] items-center pr-[15px] text-[#c4c4c4]";
  return (
    <section className="flex min-h-0 flex-[305] flex-col overflow-hidden rounded-md bg-[#282828]">
      <div className="flex h-[31px] shrink-0 items-center overflow-hidden pl-[9px]">
        <IconDrop label="Editor type"><Icon><path d="M4 5v11h4M4 10.500h4" strokeWidth="1.200" opacity=".7" /><path d="M1 1.500h6V5H1ZM9.500 9H19v3.500H9.500ZM9.500 14.500H19V18H9.500Z" fill="currentColor" stroke="none" /></Icon></IconDrop>
        <span className="ml-[6px]"><IconDrop label="Display mode"><ImageStack /></IconDrop></span>
        <label className="ml-[19px] flex h-6 min-w-0 flex-1 items-center rounded border border-[#3d3d3d] bg-[#1d1d1d] px-1 text-[#ccc]">
          <Search />
          <input aria-label="Filter" className="w-full min-w-0 bg-transparent outline-none" />
        </label>
      </div>
      <div className="min-h-0 flex-1 bg-[repeating-linear-gradient(#282828_0_25px,#2b2b2b_25px_50px)] pt-[2px]">
        <div className={clsx(row, "gap-[7px] pl-[27px]")}><CollectionIcon />Scene Collection</div>
        <div className={clsx(row, "pl-8")}>
          <Tri open />
          <span className="ml-[9px] mr-[6px] flex size-6 items-center justify-center rounded bg-[#545454] text-[#ddd]"><CollectionIcon /></span>
          Collection
          <div className="ml-auto flex items-center gap-[9px]">
            <Check label="Exclude" initial light hideLabel />
            <Toggles />
          </div>
        </div>
        <div className="relative">
          <div className="absolute left-9 top-[6px] h-[38px] w-px bg-[#555]" />
          <div className={clsx(row, "pl-[57px]")}>
            <Tri />
            <span className="ml-[9px] mr-[6px] flex size-6 items-center justify-center text-[#cd8849]"><Icon><path d="M6 2.500C20 2 21 14 13 16.500H2.500" strokeWidth="3.200" /></Icon></span>
            <span className="w-[67px] overflow-hidden whitespace-nowrap">BezierCurve</span>
            <Toggles />
          </div>
          <div className={clsx(row, "pl-[57px]")}>
            <Tri />
            <span className="ml-[9px] mr-[6px] flex size-6 items-center justify-center rounded bg-[#545454] text-[#d58a4c]"><Icon><path d="M3 3h14l-7 14.500Z" strokeWidth="2.600" /></Icon></span>
            <span className="flex w-[67px] items-center justify-between overflow-hidden">Plane<svg viewBox="0 0 4 10" className="mt-2 h-[8px] w-[3px]" fill="none" stroke="#5f8fe0" strokeWidth="2"><path d="M4 1Q-1 4 3 9" /></svg></span>
            <Toggles />
          </div>
        </div>
      </div>
      <div className="mb-[1px] ml-[9px] h-1 w-[193px] rounded-full bg-[#444]" />
    </section>
  );
}

/* ---------- properties ---------- */

const tabGroups: { name: string; color: string; icon: ReactNode }[][] = [
  [{ name: "Tool", color: "text-[#b0b0b0]", icon: <Icon><path d="M4 1v8" strokeWidth="1.200" /><path d="M2.500 9h3v2.500q2 1 1.500 5L5.500 19h-3L1 16.500q-.500-4 1.500-5ZM11 2v4q0 2.500 2 3.500V19h3V9.500q2.500-1 2.500-3.500V2l-2 1v3h-3V3Z" fill="currentColor" stroke="none" /></Icon> }],
  [
    { name: "Render", color: "text-[#b0b0b0]", icon: <Icon><path d="M1 4.500h4V2h8v2.500h6V18.500H1ZM16 1h2v2h-2Z" fill="currentColor" stroke="none" /><path d="M3.500 8.500h9M3.500 12h9M3.500 15.500h9M15 8.500h2.500M15 13h2.500" stroke="#222" strokeWidth="1.800" /></Icon> },
    { name: "Output", color: "text-[#b0b0b0]", icon: <Icon><path d="M1 1.500h18V8h-3V6H4v2H1Z" fill="currentColor" stroke="none" /><path d="M4.500 7h11v11.500h-11Z" fill="currentColor" stroke="none" /><path d="m6 17 3.500-6 4.500 6ZM12 10h2" fill="#1d1d1d" stroke="#1d1d1d" strokeWidth="1" /></Icon> },
    { name: "View Layer", color: "text-[#b0b0b0]", icon: <ImageStack /> },
    { name: "Scene", color: "text-[#b0b0b0]", icon: <SceneIcon /> },
    { name: "World", color: "text-[#b5585f]", icon: <Icon><circle cx="10" cy="10" r="7.800" /><path d="M3 6q5-5 8-2l-2 4-3 1 1 3-2 1Q2 11 3 6ZM12 12l5 1-4 5-2-3ZM14 4l4 5-4-1Z" fill="currentColor" stroke="none" /><path d="m1 19 2-3M17 4l2-3" /></Icon> },
  ],
  [{ name: "Collection", color: "text-[#e0e0e0]", icon: <Icon><path d="M1.500 2h17v4h-17ZM2.500 8.500v9.500h15V8.500" /><path d="M7.500 11.500h5" strokeWidth="2" /></Icon> }],
  [
    { name: "Object", color: "text-[#cd8849]", icon: <ObjectSquare /> },
    { name: "Modifiers", color: "text-[#6086d6]", icon: <Icon><path d="M18.500 5.500 15 8.500l-3-1-.500-3L15 1.500q-5-1-7 2-1 2-.300 4.500L1.500 14.500q-1.500 2 0 3.500 2 1.500 4 0l6.500-6.500q3 .700 5-1.500 1.800-2 1.500-4.500Z" fill="currentColor" stroke="none" /></Icon> },
    { name: "Particles", color: "text-[#5577bb]", icon: <Icon><circle cx="4" cy="4" r="3.200" fill="#6086d6" stroke="none" /><circle cx="16.500" cy="4" r="1.900" fill="currentColor" stroke="none" /><circle cx="4" cy="17.500" r="1.900" fill="currentColor" stroke="none" /><circle cx="16" cy="16.500" r="2.700" fill="currentColor" stroke="none" /><path d="M8 4h7M4 8v8M6.500 7l8 8" /></Icon> },
    { name: "Physics", color: "text-[#5577bb]", icon: <Icon><path d="M13 2.800A8 8 0 1 0 17.800 9" /><circle cx="10" cy="10.500" r="3.700" fill="#6086d6" stroke="none" /><circle cx="16.500" cy="3.500" r="2.200" fill="currentColor" stroke="none" /></Icon> },
    { name: "Constraints", color: "text-[#6086d6]", icon: <Icon><path d="M3 8 12.500 1.800q3.500-1.500 5 .700 1.500 2-.500 5L13.500 15q-2.500 4-7 3.500Q2 17.500 2 13q0-3 1-5Z" /><circle cx="8" cy="12" r="3.400" strokeWidth="2" /><path d="M13.500 4.500h3M15 3v3" strokeWidth="1" /></Icon> },
    { name: "Data", color: "text-[#00c994]", icon: <Icon><path d="M1.500 1.500h4v4h-4ZM14.500 1.500h4v4h-4ZM8 14.500h4v4H8ZM5.500 3.500h9M4 5.500l5 9M16 5.500l-5 9" /></Icon> },
    { name: "Material", color: "text-[#d5636c]", icon: <MaterialBall /> },
  ],
  [{ name: "Texture", color: "text-[#b5585f]", icon: <Icon><path d="M1.500 1.500h17v17h-17Z" /><path d="M2 2h4v4H2ZM10 2h4v4h-4ZM6 6h4v4H6ZM14 6h4v4h-4ZM2 10h4v4H2ZM10 10h4v4h-4ZM6 14h4v4H6ZM14 14h4v4h-4Z" fill="currentColor" stroke="none" /></Icon> }],
];

function Properties() {
  return (
    <section className="flex min-h-0 flex-[647] flex-col overflow-hidden rounded-md bg-[#303030]">
      <div className="flex h-[31px] shrink-0 items-center overflow-hidden pl-[9px]">
        <IconDrop label="Editor type"><Icon><rect x="1" y="2" width="18" height="7" rx="3" fill="currentColor" stroke="none" /><rect x="1" y="11.500" width="18" height="7" rx="3" fill="currentColor" stroke="none" /><rect x="11" y="3.300" width="6.500" height="4.400" rx="1.500" fill="#282828" stroke="none" /><rect x="13" y="12.800" width="4.500" height="4.400" rx="1.500" fill="#282828" stroke="none" /></Icon></IconDrop>
        <label className="ml-[27px] flex h-6 w-[144px] items-center rounded border border-[#3d3d3d] bg-[#1d1d1d] px-1 text-[#ccc]">
          <Search />
          <input aria-label="Search properties" className="w-full min-w-0 bg-transparent outline-none" />
        </label>
        <button aria-label="Options" className="-mr-1 ml-auto flex h-6 w-[23px] items-center justify-center rounded-l border border-[#3d3d3d] bg-[#282828] text-[#e5e5e5]"><Chevron /></button>
      </div>
      <div className="flex min-h-0 flex-1">
        <div role="tablist" aria-label="Property tabs" className="flex w-[34px] shrink-0 flex-col bg-[#1d1d1d] pt-[10px]">
          {tabGroups.map((g, i) => (
            <div key={i} className="mb-[5px] border-b border-[#181818] pb-[3px]">
              {g.map((t) => (
                <button key={t.name} role="tab" aria-label={t.name} aria-selected={t.name === "Material"} className={clsx("ml-px flex h-[35px] w-[33px] items-center justify-center rounded-l", t.color, t.name === "Material" && "bg-[#303030]")}>
                  {t.icon}
                </button>
              ))}
            </div>
          ))}
        </div>
        <div className="flex min-w-0 flex-1 flex-col pl-[11px] pr-[9px] pt-[11px] text-[#e5e5e5]">
          <div className="flex h-6 items-center gap-[10px] pl-px">
            <ObjectSquare />
            Plane
            <button aria-label="Pin" className="ml-auto mr-[2px] text-[#999]"><Pin /></button>
          </div>
          <div className="mt-[21px] flex gap-3">
            <div className="flex h-[98px] min-w-0 flex-1 items-end rounded border border-[#3d3d3d] bg-[#272727] px-3 pb-[7px]">
              <Tri />
              <svg viewBox="0 0 13 5" className="ml-[71px] h-[5px] w-[13px]" fill="#ccc" aria-hidden="true"><path d="M0 0h1v1H0ZM4 0h1v1H4ZM8 0h1v1H8ZM12 0h1v1h-1ZM0 4h1v1H0ZM4 4h1v1H4ZM8 4h1v1H8ZM12 4h1v1h-1Z" /></svg>
            </div>
            <div className="flex w-6 flex-col">
              <button aria-label="Add slot" className="flex h-6 items-center justify-center rounded-t bg-[#545454]"><Icon className="size-3"><path d="M0 10h20M10 0v20" strokeWidth="2" /></Icon></button>
              <button aria-label="Remove slot" className="flex h-[25px] items-center justify-center rounded-b border-t border-[#3d3d3d] bg-[#545454]"><Icon className="size-3"><path d="M0 10h20" strokeWidth="2" /></Icon></button>
              <button aria-label="Slot specials" className="mt-[8px] flex h-[25px] items-center justify-center rounded border border-[#3d3d3d] bg-[#282828]"><Chevron className="size-3" /></button>
            </div>
          </div>
          <div className="mt-[7px] flex h-[25px] overflow-hidden rounded border border-[#3d3d3d]">
            <button aria-label="Browse material" className="flex w-[38px] items-center justify-center gap-1 bg-[#282828]"><MaterialBall /><Chevron /></button>
            <button className="flex flex-1 items-center bg-[#545454] pl-[9px] pr-3">
              <Icon className="size-3"><path d="M0 10h20M10 0v20" strokeWidth="2" /></Icon>
              <span className="flex-1 pl-[12px]">New</span>
            </button>
          </div>
        </div>
      </div>
    </section>
  );
}

/* ---------- status bar ---------- */

const mouseButtons = { left: "M1 9V5q0-4 4-4h2v8Z", middle: "M5 4h4v6H5Z", right: "M13 9V5q0-4-4-4H7v8Z" };

function Hint({ button, label, className }: { button: keyof typeof mouseButtons; label: string; className?: string }) {
  return (
    <span className={clsx("flex items-center gap-[14px]", className)}>
      <svg viewBox="0 0 14 20" className="h-5 w-[14px]" fill="none" stroke="#808080" strokeWidth="1.200" aria-hidden="true">
        <path d={mouseButtons[button]} fill="#909090" stroke="none" />
        <path d="M5 1h4q4 0 4 4v10q0 4-4 4H5q-4 0-4-4V5q0-4 4-4Z" />
      </svg>
      {label}
    </span>
  );
}

export default function App() {
  return (
    <div className="flex h-screen min-h-[700px] flex-col overflow-hidden bg-[#161616] font-['DejaVu_Sans',sans-serif] text-[13px] leading-5">
      <TitleBar />
      <TopBar />
      <main className="mt-[2px] flex min-h-0 flex-1 gap-1 pl-[2px] pr-[2px]">
        <div className="flex min-w-0 flex-1 flex-col gap-[3px]">
          <Viewport />
          <NodeEditor />
        </div>
        <div className="flex w-[258px] shrink-0 flex-col gap-1">
          <Outliner />
          <Properties />
        </div>
      </main>
      <footer className="flex h-[26px] shrink-0 items-center border-b border-[#333] bg-[#1d1d1d] pl-4 pr-3 text-[#8a8a8a]">
        <Hint button="left" label="Select" className="w-[281px]" />
        <Hint button="middle" label="Rotate View" className="w-[281px]" />
        <Hint button="right" label="Object Context Menu" />
        <span className="ml-auto">3.6.0</span>
      </footer>
    </div>
  );
}
